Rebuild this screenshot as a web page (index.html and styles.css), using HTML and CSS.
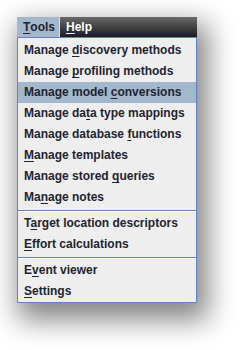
FILE: index.html
```html
<!DOCTYPE html>
<html>
<head>
<meta charset="utf-8">
<link rel="stylesheet" href="styles.css">
</head>
<body>
<div class="frame">
  <div class="menubar">
    <span class="menu active"><u>T</u>ools</span>
    <span class="menu"><u>H</u>elp</span>
  </div>
  <ul class="popup">
    <li class="item">Manage <u>d</u>iscovery methods</li>
    <li class="item">Manage <u>p</u>rofiling methods</li>
    <li class="item selected">Manage model <u>c</u>onversions</li>
    <li class="item">Manage da<u>t</u>a type mappings</li>
    <li class="item">Manage database <u>f</u>unctions</li>
    <li class="item"><u>M</u>anage templates</li>
    <li class="item">Manage stored <u>q</u>ueries</li>
    <li class="item">Ma<u>n</u>age notes</li>
    <li class="sep"></li>
    <li class="item">T<u>a</u>rget location descriptors</li>
    <li class="item"><u>E</u>ffort calculations</li>
    <li class="sep"></li>
    <li class="item">E<u>v</u>ent viewer</li>
    <li class="item"><u>S</u>ettings</li>
  </ul>
</div>
</body>
</html>
```

FILE: styles.css
```css
html, body {
  margin: 0;
  padding: 0;
  background: #ffffff;
}
body {
  min-height: 350px;
  padding-top: 17px;
  box-sizing: border-box;
}
.frame {
  margin: 0 0 0 17px;
  width: 180px;
  box-shadow: 6px 12px 26px 5px rgba(0, 0, 0, 0.48);
  font-family: "Liberation Sans", Arial, sans-serif;
  font-weight: bold;
  font-size: 12px;
}
u {
  text-decoration: underline;
  text-decoration-thickness: 1px;
  text-underline-offset: 2px;
}
.menubar {
  display: flex;
  height: 20px;
  background: linear-gradient(#6a6a6a, #4a4a4a 40%, #1c1c1c);
}
.menu {
  display: flex;
  align-items: center;
  padding: 0 6px;
  color: #ffffff;
  line-height: 20px;
}
.menu.active {
  background: #a3b8cc;
  color: #1e2430;
  width: 30px;
  border-right: 1px solid #d8e2ec;
}
.popup {
  list-style: none;
  margin: 0;
  padding: 2px 0 0 0;
  background: #eeeeee;
  border: 1px solid #6382bf;
  color: #1e2430;
}
.item {
  height: 21px;
  line-height: 21px;
  padding-left: 6px;
  white-space: nowrap;
}
.item.selected {
  background: #a3b8cc;
}
.sep {
  height: 5px;
  box-sizing: border-box;
  margin: 0;
  padding-top: 2px;
}
.sep::before {
  content: "";
  display: block;
  height: 1px;
  background: #6382bf;
  border-bottom: 1px solid #ffffff;
}
```
